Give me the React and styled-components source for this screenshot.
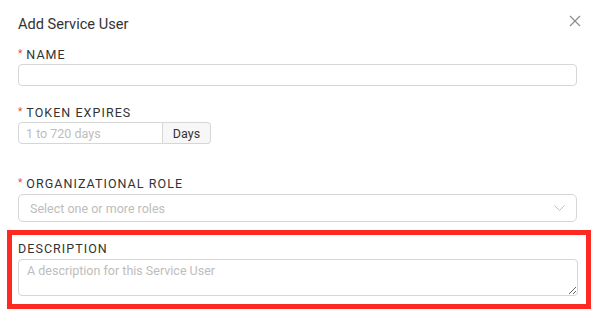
import React from "react";
import styled, { createGlobalStyle } from "styled-components";

const Global = createGlobalStyle`
  html, body { margin: 0; padding: 0; background: #fff; }
  body { font-family: Roboto, "Liberation Sans", Arial, sans-serif; color: #333; }
  * { box-sizing: border-box; }
`;

const Dialog = styled.div`
  width: 597px;
  height: 315px;
  padding: 14px 20px 0 18px;
  display: flex;
  flex-direction: column;
  background: #fff;
`;

const Header = styled.div`
  display: flex;
  justify-content: space-between;
  align-items: flex-start;
  margin-bottom: 13px;
`;

const Title = styled.h2`
  margin: 0;
  font-size: 14.6px;
  line-height: 20px;
  font-weight: 400;
  color: #333;
`;

const Close = styled.button`
  border: 0;
  background: none;
  padding: 0;
  margin: 1px -4px 0 0;
  width: 12px;
  height: 12px;
  display: flex;
  color: #8c8c8c;
  cursor: pointer;
`;

const Field = styled.div`
  display: flex;
  flex-direction: column;
  margin-bottom: ${(p) => p.$gap || 0}px;
`;

const Label = styled.label`
  display: flex;
  align-items: flex-start;
  font-size: 12.5px;
  line-height: 16px;
  letter-spacing: 1.05px;
  color: #333;
  margin-bottom: ${(p) => p.$mb ?? 1}px;
`;

const Req = styled.span`
  color: #ec4b43;
  font-size: 10px;
  line-height: 10px;
  margin: 2px 4px 0 0;
  letter-spacing: 0;
`;

const baseInput = `
  font-family: Roboto, "Liberation Sans", Arial, sans-serif;
  font-size: 12.5px;
  color: #333;
  border: 1px solid #d6d6d6;
  background: #fff;
  outline: none;
  &::placeholder { color: #bdbdbd; opacity: 1; }
`;

const TextInput = styled.input`
  ${baseInput}
  width: 100%;
  height: 22px;
  border-radius: 4px;
  padding: 0 8px;
`;

const Group = styled.div`
  display: flex;
  width: 193px;
  height: 22px;
`;

const GroupInput = styled.input`
  ${baseInput}
  width: 145px;
  height: 22px;
  border-radius: 4px 0 0 4px;
  padding: 0 7px;
`;

const Addon = styled.span`
  width: 48px;
  height: 22px;
  display: flex;
  align-items: center;
  justify-content: center;
  border: 1px solid #d6d6d6;
  border-left: 0;
  border-radius: 0 4px 4px 0;
  background: #f7f7f7;
  font-size: 12.5px;
  color: #333;
`;

const Select = styled.div`
  height: 28px;
  border: 1px solid #d6d6d6;
  border-radius: 5px;
  display: flex;
  align-items: center;
  justify-content: space-between;
  padding: 0 11px 0 11px;
  font-size: 12.5px;
  color: #bdbdbd;
`;

const Highlight = styled.div`
  margin: 8px -14px 0 -11px;
  border: 5px solid #fe2a22;
  padding: 6px 8px 8px 6px;
`;

const TextArea = styled.textarea`
  ${baseInput}
  display: block;
  width: 100%;
  height: 37px;
  border-radius: 4px;
  padding: 3px 8px;
  resize: vertical;
  line-height: 16px;
`;

export default function App() {
  return (
    <>
      <Global />
      <Dialog>
        <Header>
          <Title>Add Service User</Title>
          <Close aria-label="Close">
            <svg width="12" height="12" viewBox="0 0 12 12">
              <path d="M1 1 L11 11 M11 1 L1 11" stroke="currentColor" strokeWidth="1.2" fill="none" />
            </svg>
          </Close>
        </Header>

        <Field $gap={19}>
          <Label><Req>*</Req>NAME</Label>
          <TextInput />
        </Field>

        <Field $gap={32}>
          <Label><Req>*</Req>TOKEN EXPIRES</Label>
          <Group>
            <GroupInput placeholder="1 to 720 days" />
            <Addon>Days</Addon>
          </Group>
        </Field>

        <Field>
          <Label $mb={2}><Req>*</Req>ORGANIZATIONAL ROLE</Label>
          <Select>
            <span>Select one or more roles</span>
            <svg width="11" height="6" viewBox="0 0 11 6">
              <path d="M0.5 0.5 L5.5 5.5 L10.5 0.5" stroke="#bfbfbf" strokeWidth="1" fill="none" />
            </svg>
          </Select>
        </Field>

        <Highlight>
          <Field>
            <Label $mb={2}>DESCRIPTION</Label>
            <TextArea placeholder="A description for this Service User" />
          </Field>
        </Highlight>
      </Dialog>
    </>
  );
}
